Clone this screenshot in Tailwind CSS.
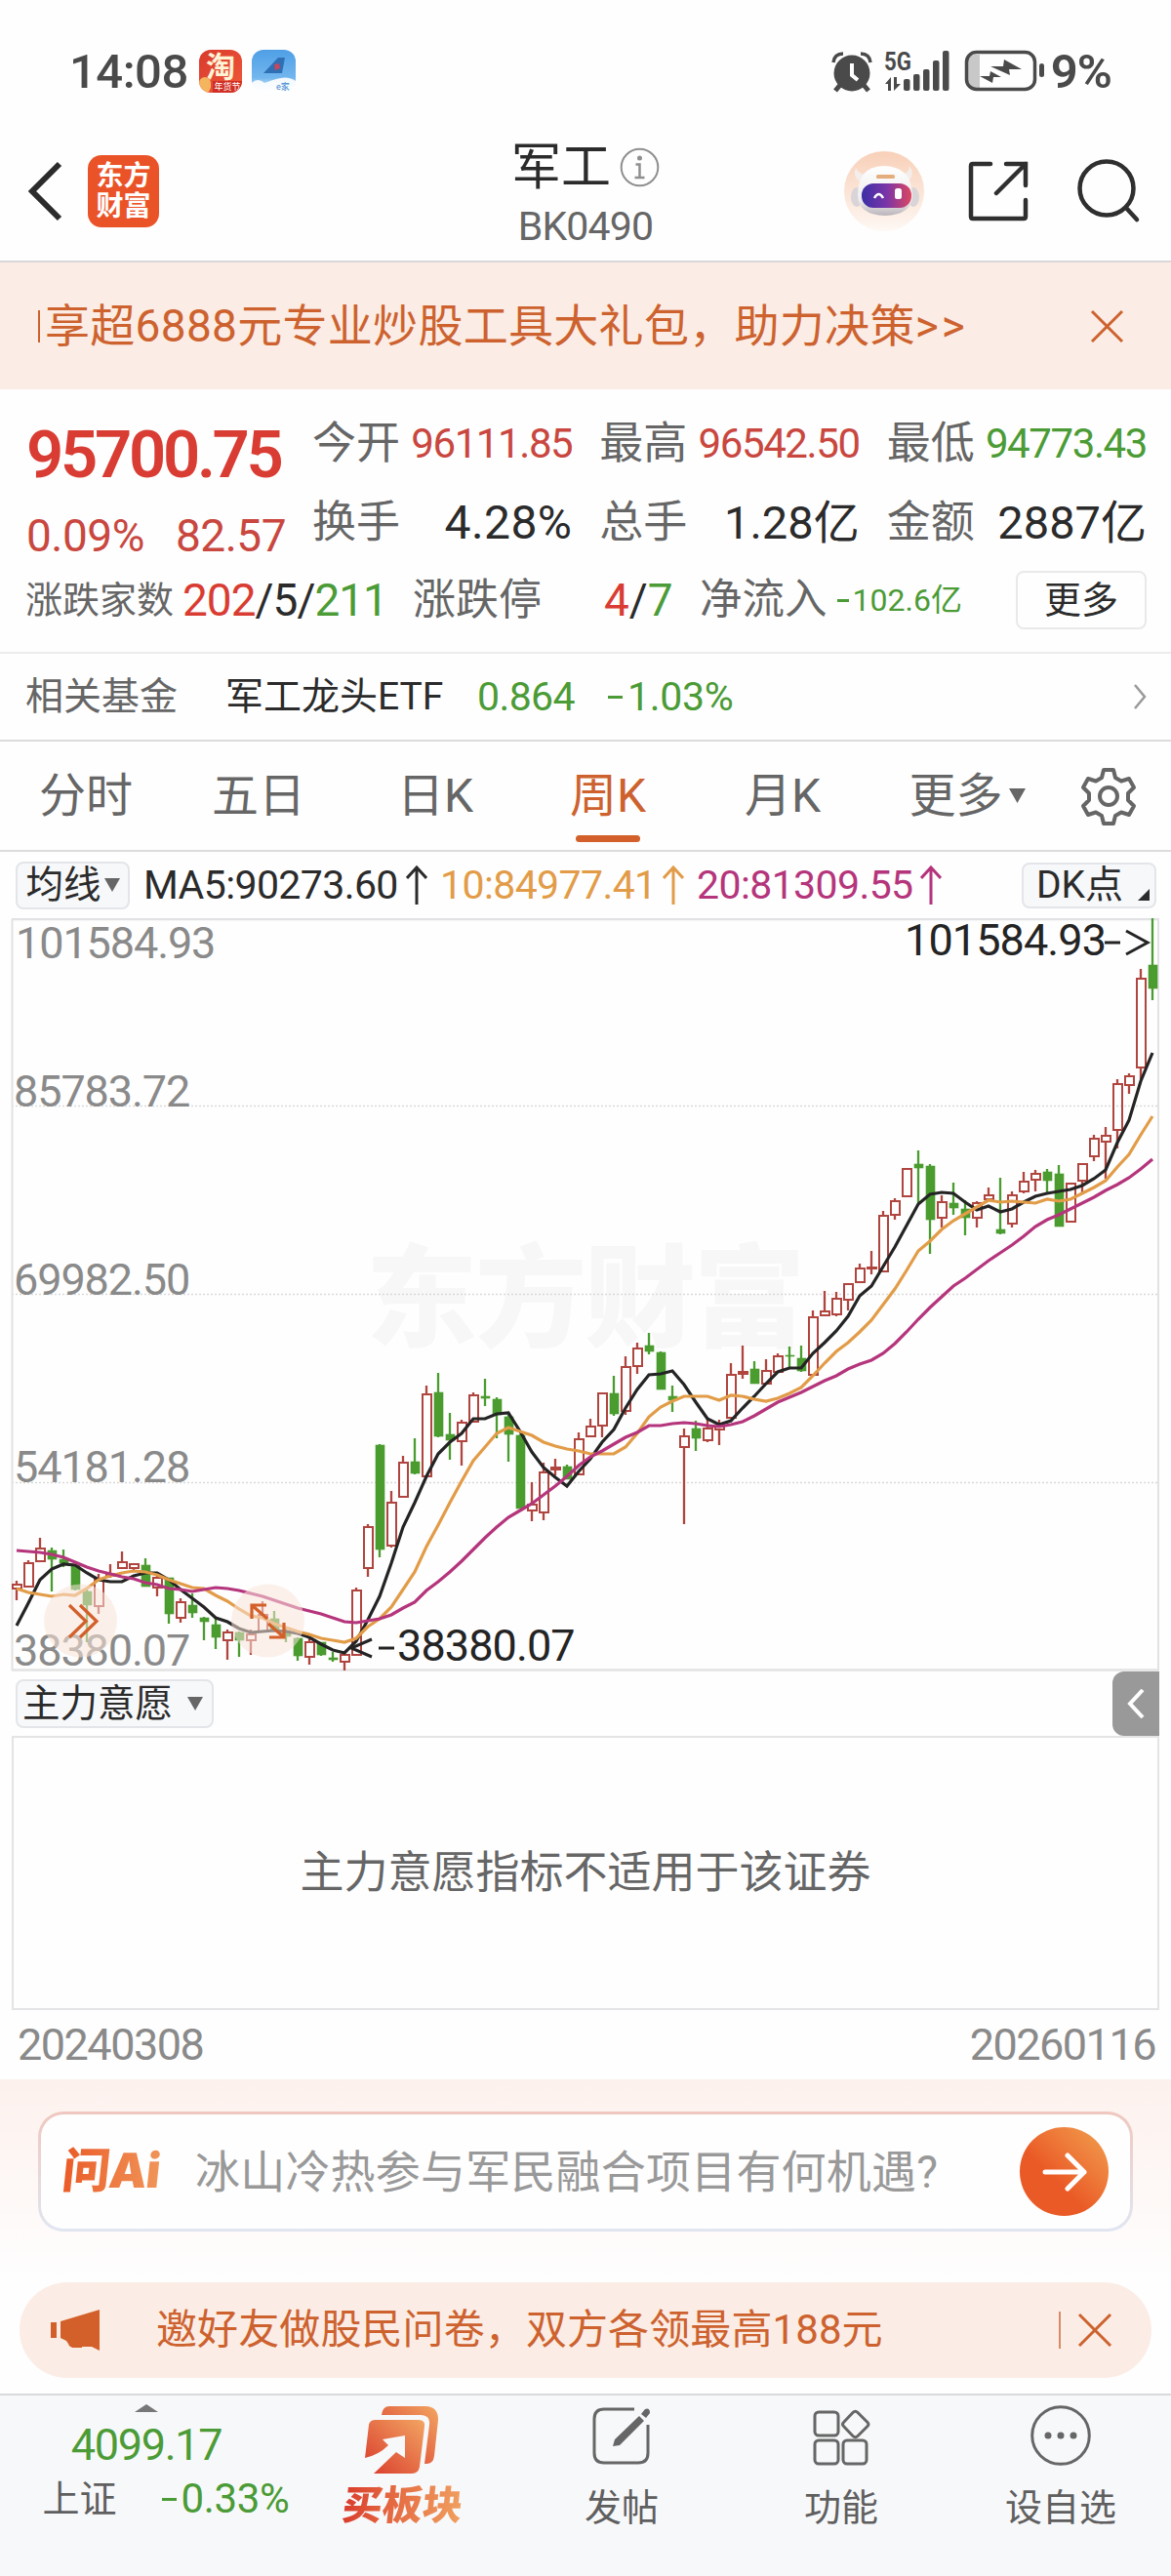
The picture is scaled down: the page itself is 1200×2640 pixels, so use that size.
<!DOCTYPE html>
<html lang="zh-CN">
<head>
    <meta charset="UTF-8">
    <meta name="viewport" content="width=device-width, initial-scale=1.0">
    <title>军工 BK0490</title>
    <script src="https://cdn.jsdelivr.net/npm/@tailwindcss/browser@4"></script>
</head>
<body class="w-[1200px] bg-[#fefefe] text-[#2b2b2b] font-['Roboto','Noto_Sans_CJK_SC',sans-serif] leading-none whitespace-nowrap overflow-x-hidden">

    <!-- status bar -->
    <div class="h-[124px] pt-[22px] pl-[71px] pr-[61px] flex items-center justify-between text-[#4a4a4a]">
        <div class="flex items-center">
            <span class="text-[49px] font-medium tracking-[-0.5px] w-[133px]">14:08</span>
            <div class="relative w-11 h-11 rounded-xl bg-linear-to-br from-[#d93a2c] to-[#f0583a] overflow-hidden text-center">
                <span class="text-[30px] font-bold text-[#fff3d6] leading-[36px]">淘</span>
                <span class="absolute left-0 bottom-0 w-3 h-4 rounded-full bg-[#f5b45e]"></span>
                <span class="absolute right-0 bottom-0 w-[30px] bg-[#cf2f25] text-[9px] leading-[12px] text-white">年货节</span>
            </div>
            <div class="ml-[10px] w-[45px] h-11">
                <svg width="45" height="44" viewBox="0 0 45 44">
                    <defs><linearGradient id="sky" x1="0" y1="0" x2="0" y2="1"><stop offset="0" stop-color="#4f9fe6"/><stop offset=".65" stop-color="#72b6ee"/><stop offset="1" stop-color="#f4faff"/></linearGradient></defs>
                    <rect width="45" height="44" rx="12" fill="url(#sky)"/>
                    <path d="M12 24 L27 8 L34 8 L31 24 Z" fill="#2f6fb4"/>
                    <path d="M23 15l5-1 1 5-5 2z" fill="#c9455b"/>
                    <path d="M0 34q6-6 13 0q8-3 12-4q12-4 20 2v2q0 10-12 10H12Q0 44 0 34z" fill="#fff" opacity=".9"/>
                    <text x="25" y="41" font-size="9" fill="#3c86cc">e家</text>
                </svg>
            </div>
        </div>
        <div class="flex items-center">
            <svg class="overflow-visible" width="226" height="44" viewBox="850 51 226 44" fill="#4a4a4a">
                <!-- alarm -->
                <circle cx="872" cy="75" r="18.5"/>
                <path d="M853 64Q854 55 863 55M891 64Q890 55 881 55" fill="none" stroke="#4a4a4a" stroke-width="3.5"/>
                <path d="M860 87l-5 6M884 87l5 6" stroke="#4a4a4a" stroke-width="5"/>
                <path d="M872 65v12l6 5" fill="none" stroke="#fefefe" stroke-width="4"/>
                <!-- network -->
                <text x="905" y="72" font-size="25" font-weight="700" textLength="28" lengthAdjust="spacingAndGlyphs">5G</text>
                <path d="M906 86l6-7v14h-3v-7zM915 79v14l7-7h-4v-7z"/>
                <rect x="925" y="81" width="6.500" height="12" rx="2"/><rect x="935" y="76" width="6.500" height="17" rx="2"/><rect x="945" y="71" width="6.500" height="22" rx="2"/><rect x="955" y="62" width="6.500" height="31" rx="2"/><rect x="965" y="52" width="6.500" height="41" rx="2"/>
                <!-- battery -->
                <path d="M1003 56v34h-5q-7 0-7-8V64q0-8 7-8z" fill="#c8c8c8"/>
                <rect x="989.500" y="53.500" width="70" height="38" rx="10" fill="none" stroke="#4a4a4a" stroke-width="3.500"/>
                <rect x="1064" y="65" width="5" height="14" rx="2.500"/>
                <path d="M1014 68h13l1-7 18 10h-13l1 6zM1003 78h10l1-5 11 6h-8l-1 6z"/>
            </svg>
            <span class="text-[49px] font-semibold tracking-[-1px]">9%</span>
        </div>
    </div>

    <!-- title bar -->
    <div class="relative h-[145px] border-b-2 border-[#d8d8da] flex items-center justify-between pl-7 pr-[31px]">
        <div class="flex items-center gap-[26px]">
            <svg width="36" height="62" viewBox="0 0 36 62"><path d="M33 3L5 31l28 28" fill="none" stroke="#2b2b2b" stroke-width="6"/></svg>
            <div class="w-[73px] h-[74px] rounded-[14px] bg-[#ea5328] text-white text-[28px] leading-[31px] font-bold text-center pt-[6px]">东方<br>财富</div>
        </div>
        <div class="absolute left-1/2 -translate-x-1/2 top-[22px] flex flex-col items-center">
            <div class="flex items-center h-[50px] gap-[9px]">
                <span class="text-[51px]">军工</span>
                <svg width="41" height="41" viewBox="0 0 41 41"><circle cx="20.500" cy="20.500" r="18.800" fill="none" stroke="#8f8f8f" stroke-width="2"/><circle cx="20.500" cy="11" r="2.500" fill="#8f8f8f"/><path d="M16.500 17.500h4v13M15.500 31h10" fill="none" stroke="#8f8f8f" stroke-width="2.500"/></svg>
            </div>
            <span class="text-[41px] text-[#666] tracking-[-0.8px] mt-4">BK0490</span>
        </div>
        <div class="flex items-center">
            <svg width="82" height="82" viewBox="0 0 82 82">
                <defs>
                    <linearGradient id="halo" x1="0" y1="0" x2="0" y2="1"><stop offset="0" stop-color="#f8d0b8"/><stop offset="1" stop-color="#fef8f4"/></linearGradient>
                    <linearGradient id="visor"><stop offset="0" stop-color="#3b2fa6"/><stop offset=".5" stop-color="#7a35a8"/><stop offset="1" stop-color="#dc4760"/></linearGradient>
                    <linearGradient id="shell" x1="0" y1="0" x2="0" y2="1"><stop offset="0" stop-color="#fff"/><stop offset=".7" stop-color="#eeebed"/><stop offset="1" stop-color="#b9b4ba"/></linearGradient>
                </defs>
                <circle cx="41" cy="41" r="41" fill="url(#halo)"/>
                <path d="M12 17q-4 9 5 15l6-8q-8 0-11-7zM67 15q6 8-1 16l-6-7q7-2 7-9z" fill="#f3eeec"/>
                <ellipse cx="13" cy="47" rx="6" ry="10" fill="#d8d4d8"/><ellipse cx="71" cy="47" rx="6" ry="10" fill="#d8d4d8"/>
                <path d="M14 45Q14 16 40 15Q69 15 70 45Q70 65 42 66Q14 65 14 45z" fill="url(#shell)"/>
                <rect x="33" y="24" width="19" height="4" rx="1.500" fill="#e5ad7c"/>
                <rect x="18" y="33" width="51" height="25" rx="12" fill="url(#visor)"/>
                <path d="M31 48q4.500-8 9 0" fill="none" stroke="#fff" stroke-width="2.500"/>
                <rect x="52" y="38" width="7" height="11" rx="2.500" fill="#fff"/>
            </svg>
            <svg class="ml-[44px]" width="64" height="64" viewBox="0 0 64 64" fill="none" stroke="#2f2f2f" stroke-width="4.500" stroke-linecap="round"><path d="M24 4H6q-2 0-2 2v52q0 2 2 2h52q2 0 2-2V41M40 4h20v22M60 4L30 34"/></svg>
            <svg class="ml-[48px]" width="66" height="66" viewBox="0 0 66 66" fill="none" stroke="#2f2f2f" stroke-width="4.500" stroke-linecap="round"><circle cx="31" cy="30" r="27.500"/><path d="M51 50l11 12"/></svg>
        </div>
    </div>

    <!-- promo banner -->
    <div class="h-[130px] bg-[#fbede5] text-[#cd622f] flex items-center pl-[39px] pr-12">
        <span class="w-[2px] h-[33px] bg-[#cd622f] mr-[5px]"></span>
        <span class="text-[46px] tracking-[0.3px]">享超6888元专业炒股工具大礼包，助力决策<span class="tracking-[3px]">&gt;&gt;</span></span>
        <svg class="ml-auto" width="35" height="35" viewBox="0 0 35 35"><path d="M2 2l31 31M33 2L2 33" stroke="#cd622f" stroke-width="3"/></svg>
    </div>

    <!-- quote -->
    <div class="h-[271px] border-b-2 border-[#ececee]">
        <div class="h-[190px] flex pl-[27px] pr-[25px]">
            <div class="w-[293px] pt-[25px]">
                <div class="h-[84px] flex items-center text-[67px] font-semibold tracking-[-3.3px] text-[#d93c33]">95700.75</div>
                <div class="h-[82px] w-[266px] flex items-center justify-between text-[46px] tracking-[-0.5px] text-[#c9473f]"><span>0.09%</span><span>82.57</span></div>
            </div>
            <div class="flex-1 pt-[15px] grid grid-cols-3 auto-rows-[81px] gap-x-7 text-[45px] text-[#666]">
                <div class="flex items-center justify-between"><span>今开</span><span class="text-[42px] tracking-[-1.4px] text-[#c9473f]">96111.85</span></div>
                <div class="flex items-center justify-between"><span>最高</span><span class="text-[42px] tracking-[-1.4px] text-[#c9473f]">96542.50</span></div>
                <div class="flex items-center justify-between"><span>最低</span><span class="text-[42px] tracking-[-1.4px] text-[#4b9b36]">94773.43</span></div>
                <div class="flex items-center justify-between"><span>换手</span><span class="text-[48px] tracking-[0.4px] text-[#2b2b2b]">4.28%</span></div>
                <div class="flex items-center justify-between"><span>总手</span><span class="text-[47px] text-[#2b2b2b]">1.28亿</span></div>
                <div class="flex items-center justify-between"><span>金额</span><span class="text-[47px] text-[#2b2b2b]">2887亿</span></div>
            </div>
        </div>
        <div class="h-[52px] flex items-center pl-[26px] pr-[25px] text-[#666]">
            <span class="text-[38px] w-[161px]">涨跌家数</span>
            <span class="text-[46px] tracking-[-1px] w-[236px] text-[#2b2b2b]"><span class="text-[#d93c33]">202</span>/5/<span class="text-[#4b9b36]">211</span></span>
            <span class="text-[44px] w-[196px]">涨跌停</span>
            <span class="text-[46px] w-[98px] text-[#2b2b2b]"><span class="text-[#d93c33]">4</span>/<span class="text-[#4b9b36]">7</span></span>
            <span class="text-[43.500px]">净流入</span>
            <span class="ml-[10px] text-[32px] text-[#4b9b36] flex items-center"><span class="w-[12px] h-[3px] mr-1 bg-[#4b9b36]"></span>102.6亿</span>
            <span class="ml-auto w-[134px] h-[60px] border-2 border-[#e9e9eb] rounded-lg flex items-center justify-center text-[38px] text-[#2b2b2b]">更多</span>
        </div>
    </div>

    <!-- related fund -->
    <div class="h-[90px] border-b-2 border-[#dcdcde] flex items-center pl-[26px] pr-[25px] text-[39px]">
        <span class="w-[205px] text-[#666]">相关基金</span>
        <span class="w-[258px]">军工龙头ETF</span>
        <span class="w-[134px] text-[41px] tracking-[-0.6px] text-[#4b9b36]">0.864</span>
        <span class="text-[41px] tracking-[-0.3px] text-[#4b9b36] flex items-center"><span class="w-[15px] h-[3px] mr-[5px] bg-[#4b9b36]"></span>1.03%</span>
        <svg class="ml-auto" width="14" height="26" viewBox="0 0 14 26"><path d="M2 1l10 12L2 25" fill="none" stroke="#999" stroke-width="2.500"/></svg>
    </div>

    <!-- period tabs -->
    <div class="h-[113px] border-b-2 border-[#dcdcde] flex text-[48px] text-[#666]">
        <div class="w-[176px] flex items-center justify-center">分时</div>
        <div class="w-[178px] flex items-center justify-center">五日</div>
        <div class="w-[180px] flex items-center justify-center pl-1">日K</div>
        <div class="relative w-[178px] flex items-center justify-center text-[#cd622f]">周K
            <span class="absolute left-[56px] top-[96px] w-[66px] h-[7px] rounded-full bg-[#d3602a]"></span>
        </div>
        <div class="w-[180px] flex items-center justify-center">月K</div>
        <div class="w-[178px] flex items-center justify-center gap-[6px] pl-5">更多<svg width="17" height="15"><path d="M0 0h17l-8.500 15z" fill="#666"/></svg></div>
        <div class="flex-1 flex items-center justify-center pl-[2px]">
            <svg width="60" height="60" viewBox="0 0 60 60" fill="none" stroke="#666" stroke-width="4" stroke-linejoin="round"><path d="M25 3h10l2 8 6 3.500 8-2.500 5 9-6 6v7l6 6-5 9-8-2.500-6 3.500-2 8H25l-2-8-6-3.500-8 2.500-5-9 6-6v-7l-6-6 5-9 8 2.500 6-3.500z"/><circle cx="30" cy="30" r="9"/></svg>
        </div>
    </div>

    <!-- moving averages -->
    <div class="h-[68px] flex items-center pl-4 pr-[15px]">
        <div class="w-[117px] h-[49px] border-2 border-[#e3e5e9] rounded-lg bg-[#f7f8fa] flex items-center justify-center gap-[3px] text-[38.500px]">均线<svg width="16" height="14"><path d="M0 0h16l-8 14z" fill="#666"/></svg></div>
        <span class="ml-[14px] w-[269px] text-[41px] tracking-[-0.6px]">MA5:90273.60</span>
        <svg width="22" height="42" viewBox="0 0 22 42" fill="none" stroke="#2b2b2b" stroke-width="3"><path d="M11 41V3M1 14L11 3l10 11"/></svg>
        <span class="ml-[13px] w-[228px] text-[41px] tracking-[-0.6px] text-[#e29c48]">10:84977.41</span>
        <svg width="22" height="42" viewBox="0 0 22 42" fill="none" stroke="#e29c48" stroke-width="3"><path d="M11 41V3M1 14L11 3l10 11"/></svg>
        <span class="ml-[13px] w-[229px] text-[41px] tracking-[-0.6px] text-[#b5357c]">20:81309.55</span>
        <svg width="22" height="42" viewBox="0 0 22 42" fill="none" stroke="#b5357c" stroke-width="3"><path d="M11 41V3M1 14L11 3l10 11"/></svg>
        <div class="ml-auto w-[138px] h-[47px] border-2 border-[#e3e5e9] rounded-lg bg-[#f7f8fa] flex items-center pl-[13px] text-[39px]">DK点<svg class="ml-auto mr-[5px] mt-5" width="12" height="12"><path d="M12 0v12H0z" fill="#2b2b2b"/></svg></div>
    </div>

    <!-- weekly candles -->
    <svg id="chart" class="block" width="1200" height="772" viewBox="0 941 1200 772" fill="none">
        <text x="375" y="1371" font-size="114" font-weight="900" fill="#f7f7f8" textLength="450">东方财富</text>
        <path d="M12 1133.500H1187M12 1326.500H1187M12 1519.500H1187" stroke="#d9d9d9" stroke-width="1.500" stroke-dasharray="2 2"/>
        <path d="M12.500 942V1712M1187 942V1712" stroke="#e2e2e4" stroke-width="2"/>
        <path d="M12 942H1188M12 1711.500H1188" stroke="#e2e2e4" stroke-width="2.500"/>
        <g id="candles" stroke-width="2.300"></g>
        <path id="ma5" stroke="#242424" stroke-width="3.200"/>
        <path id="ma10" stroke="#e29c48" stroke-width="3.200"/>
        <path id="ma20" stroke="#b5357c" stroke-width="3.200"/>
        <g font-size="45" fill="#8a8a8a" letter-spacing="-1.100">
            <text x="16" y="982">101584.93</text>
            <text x="14" y="1134">85783.72</text>
            <text x="14" y="1327">69982.50</text>
            <text x="14" y="1519">54181.28</text>
            <text x="14" y="1707">38380.07</text>
        </g>
        <g fill="#fae4d8" opacity=".55"><circle cx="82.500" cy="1661" r="37.500"/><circle cx="274.500" cy="1661" r="37.500"/></g>
        <g stroke="#d3602a" stroke-width="3.200">
            <path d="M71 1645l17 16.500L71 1678M82 1645l17 16.500L82 1678"/>
            <path d="M273 1645h-15v14M258 1645l16 14M276 1678h15v-15M291 1678l-16-14"/>
        </g>
        <path d="M1132 966h16M1154 954l22 12-22 12M381 1680l-21 9 21 9M388 1689h16" stroke="#242424" stroke-width="3"/>
        <g font-size="45" fill="#242424" letter-spacing="-0.900">
            <text x="927" y="979">101584.93</text>
            <text x="407" y="1702">38380.07</text>
        </g>
    </svg>

    <!-- sub indicator -->
    <div class="h-[66px] flex items-center justify-between pl-4 pr-[12px]">
        <div class="w-[203px] h-[50px] border-2 border-[#e3e5e9] rounded-lg bg-[#f7f8fa] flex items-center pl-[5px] gap-[15px] text-[38.500px]">主力意愿<svg width="16" height="14"><path d="M0 0h16l-8 14z" fill="#666"/></svg></div>
        <div class="w-12 h-[66px] bg-[#999] rounded-l-[12px] flex items-center justify-center">
            <svg width="18" height="30" viewBox="0 0 18 30"><path d="M16 1L3 15l13 14" fill="none" stroke="#fff" stroke-width="4"/></svg>
        </div>
    </div>
    <div class="ml-3 w-[1176px] h-[281px] border-2 border-[#e4e4e6] flex items-center justify-center text-[45px] text-[#666]">主力意愿指标不适用于该证券</div>
    <div class="h-[71px] flex items-center justify-between pl-[18px] pr-[16px] text-[45px] tracking-[-1.5px] text-[#8a8a8a]"><span>20240308</span><span>20260116</span></div>

    <!-- ask AI -->
    <div class="h-[208px] pt-[33px] px-[39px] bg-linear-to-b from-[#fdf1ed] to-[#fefefe]">
        <div class="h-[123px] p-[3px] rounded-[26px] bg-linear-to-b from-[#efc7bf] to-[#e0e6f1]">
            <div class="h-full rounded-[23px] bg-[#fefefe] flex items-center pl-[22px] pr-[22px]">
                <span class="w-[110px] text-[49px] font-black -skew-x-6 tracking-[-1px] leading-[60px] bg-linear-to-r from-[#ea5a26] to-[#f09a5c] bg-clip-text text-transparent">问<span class="font-['Inter']">Ai</span></span>
                <span class="ml-[26px] text-[46px] tracking-[0.2px] text-[#999]">冰山冷热参与军民融合项目有何机遇?</span>
                <div class="ml-auto w-[91px] h-[91px] rounded-full bg-linear-to-tr from-[#ea5a26] from-40% to-[#f0a050] flex items-center justify-center">
                    <svg width="46" height="40" viewBox="0 0 46 40" fill="none" stroke="#fff" stroke-width="5" stroke-linecap="round" stroke-linejoin="round"><path d="M3 20h40M26 3l17 17-17 17"/></svg>
                </div>
            </div>
        </div>
    </div>

    <!-- survey notice -->
    <div class="mx-5 mb-4 h-[98px] rounded-full bg-[#fbede5] text-[#cd622f] flex items-center pl-8 pr-[40px]">
        <svg width="50" height="42" viewBox="0 0 50 42" fill="#d3602a"><path d="M0 13h6v16H0zM10 12L50 0v42l-8-4H20l-4-6-6-3z"/><path d="M18 36h14v3H22z"/></svg>
        <span class="ml-[58px] text-[42px] tracking-[0.1px]">邀好友做股民问卷，双方各领最高188元</span>
        <span class="ml-auto w-[2px] h-[38px] bg-[#d58c68] mr-[17px]"></span>
        <svg width="36" height="36" viewBox="0 0 36 36"><path d="M2 2l32 32M34 2L2 34" stroke="#cd622f" stroke-width="3"/></svg>
    </div>

    <!-- bottom bar -->
    <div class="h-[187px] border-t-2 border-[#d8dadc] bg-[#f7f8fa] flex text-[38px] text-[#5f5f5f]">
        <div class="w-[300px] flex flex-col items-center pt-[9px]">
            <svg width="24" height="8"><path d="M12 0l12 8H0z" fill="#777"/></svg>
            <div class="h-[66px] flex items-center text-[45px] tracking-[-1.3px] text-[#4b9b36]">4099.17</div>
            <div class="h-[46px] flex items-center gap-[47px] pl-10"><span>上证</span><span class="text-[42px] tracking-[-0.3px] text-[#4b9b36] flex items-center"><span class="w-[15px] h-[3px] mr-1 bg-[#4b9b36]"></span>0.33%</span></div>
        </div>
        <div class="w-[224px] flex flex-col items-center pt-[10px]">
            <svg width="78" height="72" viewBox="0 0 78 72">
                <defs><linearGradient id="buy" x1="0" y1="1" x2="1" y2="0"><stop offset="0" stop-color="#d93a2c"/><stop offset="1" stop-color="#f2a562"/></linearGradient></defs>
                <path d="M18 10q1-9 8-9h37q13 0 13 14l-4 37q-1 8-8 8h-2l5-40q1-10-9-10z" fill="url(#buy)"/>
                <path d="M5 20q1-5 7-5h44q7 0 6 7l-5 41q-1 7-8 7H10l23-22 9 6V31l-23 4 6 6Q15 51 1 54z" fill="url(#buy)"/>
            </svg>
            <span class="mt-[8px] text-[41px] font-black -skew-x-6 leading-[46px] bg-linear-to-r from-[#d93a2c] to-[#f0a060] bg-clip-text text-transparent">买板块</span>
        </div>
        <div class="w-[226px] flex flex-col items-center pt-[12px]">
            <svg width="60" height="60" viewBox="0 0 60 60"><path d="M43 2H12Q2 2 2 12v35q0 10 10 10h35q10 0 10-10V18" fill="none" stroke="#666" stroke-width="3"/><path d="M21 40l2-7L48 9l5 5-25 25zM50 7l4-5q5-2 5 4l-4 5z" fill="#666"/></svg>
            <span class="mt-[24px]">发帖</span>
        </div>
        <div class="w-[224px] flex flex-col items-center pt-[13px]">
            <svg width="60" height="60" viewBox="0 0 60 60" fill="none" stroke="#666" stroke-width="3"><rect x="3" y="4" width="24" height="24" rx="4"/><rect x="3" y="33" width="24" height="24" rx="4"/><rect x="32" y="33" width="24" height="24" rx="4"/><path d="M42 4.500Q44.500 2 47 4.500L57 14.500Q59 16.500 57 18.500L47 28.500Q44.500 31 42 28.500L32.500 18.500Q30.500 16.500 32.500 14.500z"/></svg>
            <span class="mt-[23px]">功能</span>
        </div>
        <div class="flex-1 flex flex-col items-center pt-[10px]">
            <svg width="62" height="62" viewBox="0 0 62 62"><circle cx="31" cy="31" r="29.300" fill="none" stroke="#666" stroke-width="3"/><g fill="#666"><circle cx="18" cy="31" r="3.500"/><circle cx="31" cy="31" r="3.500"/><circle cx="44" cy="31" r="3.500"/></g></svg>
            <span class="mt-[24px]">设自选</span>
        </div>
    </div>

    <script>
        // one entry per week: colour, high, body top, body bottom, low
        const candles = `r 1620 1624 1628 1640,r 1599 1602 1626 1626,r 1576 1587 1600 1600,g 1586 1589 1598 1631,g 1588 1598 1602 1606,
            g 1603 1604 1629 1630,g 1628 1631 1645 1683,r 1613 1618 1646 1654,r 1603 1613 1615 1617,r 1590 1601 1607 1607,
            r 1602 1603 1607 1610,g 1597 1604 1626 1626,r 1612 1617 1627 1636,g 1617 1617 1654 1664,r 1638 1642 1658 1663,
            g 1633 1645 1653 1658,g 1657 1658 1662 1681,g 1659 1665 1678 1690,r 1670 1673 1681 1701,g 1672 1673 1681 1698,
            r 1670 1675 1681 1696,r 1641 1655 1672 1672,g 1651 1659 1671 1672,g 1668 1673 1677 1683,g 1678 1679 1697 1702,
            r 1678 1683 1698 1706,g 1683 1683 1696 1697,g 1693 1699 1701 1703,r 1694 1696 1703 1712,r 1627 1630 1696 1697,
            r 1562 1565 1607 1616,g 1480 1481 1588 1596,r 1528 1540 1584 1586,r 1492 1499 1534 1534,g 1474 1498 1510 1511,
            r 1420 1429 1513 1514,g 1407 1427 1472 1473,g 1448 1470 1476 1496,r 1455 1458 1477 1502,r 1427 1430 1457 1457,
            g 1413 1431 1433 1441,g 1432 1434 1450 1474,g 1450 1452 1470 1498,g 1470 1471 1546 1546,r 1519 1542 1548 1559,
            r 1499 1509 1550 1558,r 1495 1504 1506 1512,g 1501 1503 1516 1516,r 1468 1475 1511 1512,r 1454 1462 1472 1473,
            r 1427 1428 1461 1473,g 1410 1428 1449 1451,r 1390 1401 1446 1450,r 1376 1382 1400 1408,g 1366 1379 1385 1388,
            g 1385 1386 1424 1424,g 1420 1431 1435 1447,r 1464 1472 1483 1562,g 1456 1464 1474 1487,r 1454 1464 1476 1478,
            r 1455 1462 1465 1481,r 1397 1409 1453 1454,r 1379 1406 1408 1413,g 1395 1403 1418 1418,r 1393 1405 1418 1418,
            r 1387 1390 1406 1406,g 1380 1389 1390 1402,g 1379 1392 1405 1406,r 1343 1350 1409 1410,r 1323 1344 1348 1348,
            r 1324 1331 1347 1349,r 1315 1316 1332 1343,r 1295 1300 1314 1314,r 1282 1299 1300 1306,r 1241 1246 1303 1303,
            r 1228 1231 1245 1250,r 1197 1198 1226 1226,g 1179 1193 1197 1233,g 1193 1195 1250 1285,r 1225 1232 1248 1258,
            g 1212 1233 1238 1245,g 1230 1239 1248 1266,r 1231 1233 1248 1258,r 1217 1225 1229 1229,g 1207 1260 1264 1265,
            r 1221 1225 1254 1258,r 1201 1211 1221 1223,r 1199 1203 1209 1221,g 1198 1201 1210 1222,g 1194 1203 1257 1257,
            r 1213 1213 1252 1252,r 1193 1193 1210 1222,r 1163 1167 1185 1190,r 1155 1164 1170 1208,r 1106 1111 1158 1177,
            r 1100 1103 1112 1121,r 993 1003 1094 1106,g 941 989 1013 1025`.split(',');

        const averages = {
            ma5: '1666 1643 1619 1608 1603 1604 1612 1619 1621 1621 1615 1612 1612 1619 1629 1638 1647 1658 1662 1669 1673 1672 1671 1672 1674 1678 1685 1691 1694 1682 1660 1636 1602 1565 1540 1513 1490 1478 1469 1454 1454 1449 1448 1467 1488 1504 1514 1523 1508 1495 1478 1465 1443 1424 1409 1408 1405 1419 1437 1454 1460 1456 1443 1431 1418 1406 1402 1402 1387 1376 1364 1349 1328 1318 1298 1278 1256 1234 1224 1222 1223 1232 1240 1236 1242 1239 1232 1226 1223 1221 1219 1215 1208 1199 1171 1148 1108 1079',
            ma10: '1628 1632 1634 1636 1634 1635 1628 1619 1615 1612 1610 1611 1614 1619 1623 1627 1628 1635 1641 1649 1656 1658 1664 1668 1672 1675 1679 1681 1683 1679 1667 1659 1647 1629 1611 1585 1563 1540 1518 1497 1483 1469 1463 1467 1471 1478 1482 1485 1487 1490 1490 1490 1483 1469 1452 1442 1436 1431 1431 1431 1435 1430 1431 1434 1436 1433 1428 1422 1410 1397 1385 1376 1365 1353 1337 1321 1302 1282 1272 1260 1251 1244 1237 1230 1232 1231 1232 1233 1229 1231 1229 1223 1217 1210 1196 1183 1163 1144',
            ma20: '1589 1590 1591 1593 1596 1601 1606 1610 1613 1616 1618 1622 1624 1628 1629 1631 1629 1627 1628 1630 1633 1636 1640 1644 1648 1651 1654 1658 1662 1663 1661 1659 1655 1648 1642 1630 1621 1611 1600 1588 1576 1565 1555 1548 1541 1532 1523 1513 1502 1493 1487 1480 1473 1468 1461 1461 1459 1458 1459 1461 1462 1460 1457 1451 1444 1437 1432 1427 1421 1415 1410 1403 1398 1394 1387 1377 1365 1352 1340 1329 1318 1310 1301 1292 1284 1276 1267 1257 1250 1245 1239 1233 1227 1220 1214 1207 1198 1188'
        };

        const xAt = i => 17 + i * 12;

        document.getElementById('candles').innerHTML = candles.map((row, i) => {
            const [kind, ...v] = row.trim().split(' ');
            const [high, top, bottom, low] = v.map(Number);
            const x = xAt(i);
            const color = kind === 'r' ? '#b0453f' : '#4a9c2f';
            const h = Math.max(bottom - top, 1);
            const fill = kind === 'g' ? color : 'none';
            return `<path d="M${x} ${high}V${top}M${x} ${bottom}V${low}" stroke="${color}"/>` +
                `<rect x="${x - 4}" y="${top}" width="9" height="${h}" fill="${fill}" stroke="${color}" stroke-width="${kind === 'g' ? 0.6 : 2}"/>`;
        }).join('');

        for (const id in averages) {
            const points = averages[id].split(' ').map((y, i) => `${xAt(i)} ${y}`);
            document.getElementById(id).setAttribute('d', 'M' + points.join('L'));
        }
    </script>
</body>
</html>
